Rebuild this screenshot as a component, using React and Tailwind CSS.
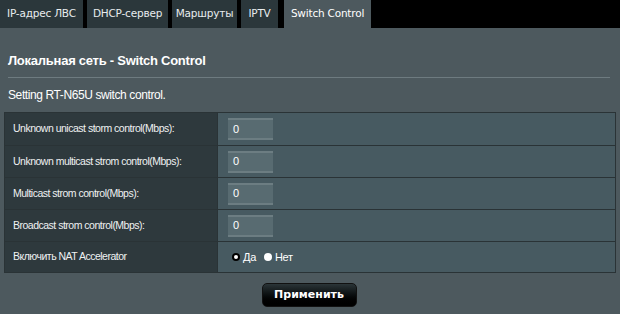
export default function App() {
  const rows = [
    "Unknown unicast storm control(Mbps):",
    "Unknown multicast strom control(Mbps):",
    "Multicast strom control(Mbps):",
    "Broadcast strom control(Mbps):",
  ];
  const tabs = [
    ["IP-адрес ЛВС", "w-[83px]"],
    ["DHCP-сервер", "w-[81px]"],
    ["Маршруты", "w-[65px]"],
    ["IPTV", "w-[37px]"],
  ];
  return (
    <div className="w-[620px] h-[314px] bg-[#4d595e] overflow-hidden" style={{ fontFamily: '"Liberation Sans", Arial, sans-serif' }}>
      <div className="h-[28px] bg-black flex items-stretch gap-[4px]" style={{ fontFamily: '"DejaVu Sans", Verdana, sans-serif' }}>
        {tabs.map(([t, w]) => (
          <div key={t} className={`${w} bg-[#2b373b] text-[#e8ecee] text-[10.5px] tracking-[-0.2px] flex items-center justify-center`}>{t}</div>
        ))}
        <div className="w-[87px] bg-[#4d595e] text-white text-[10.5px] tracking-[-0.2px] ml-[2px] flex items-center justify-center">Switch Control</div>
      </div>
      <div className="px-[8px] pt-[25px]">
        <div className="text-white font-bold text-[13px] leading-[16px] tracking-[-0.25px]">Локальная сеть - Switch Control</div>
        <div className="h-px bg-[#6e7b80] mt-[8px] mr-[2px]" />
        <div className="text-white text-[12px] leading-[14px] mt-[10px] tracking-[-0.4px]">Setting RT-N65U switch control.</div>
      </div>
      <div className="mx-[4px] mt-[10px] border border-[#2a3336] bg-[#475a61]">
        {rows.map((r, i) => (
          <div key={r} className={`flex h-[32px] ${i > 0 ? "border-t border-[#2a3336]" : ""}`}>
            <div className="w-[213px] bg-[#2e393d] text-[#eef1f2] text-[10.5px] tracking-[-0.5px] flex items-center pl-[8px] border-r border-[#2a3336]">{r}</div>
            <div className="flex items-center pl-[10px]">
              <div className="w-[45px] h-[22px] bg-[#586b71] border-t-[2px] border-t-[#6c7d82] border-b-[2px] border-b-[#6c7d82] text-white text-[11px] flex items-center pl-[5px]">0</div>
            </div>
          </div>
        ))}
        <div className="flex h-[31px] border-t border-[#2a3336]">
          <div className="w-[213px] bg-[#2e393d] text-[#eef1f2] text-[10.5px] tracking-[-0.5px] flex items-center pl-[8px] border-r border-[#2a3336]">Включить NAT Accelerator</div>
          <div className="flex items-center pl-[14px] text-white text-[11px] tracking-[-0.3px]">
            <span className="w-[8px] h-[8px] rounded-full bg-white border-[2px] border-black inline-block mr-[3px]" />
            <span>Да</span>
            <span className="w-[8px] h-[8px] rounded-full bg-white inline-block ml-[8px] mr-[3px]" />
            <span>Нет</span>
          </div>
        </div>
      </div>
      <div className="flex justify-center mt-[10px] pr-[2px]">
        <div className="w-[95px] h-[24px] rounded-[5px] bg-gradient-to-b from-[#2b3538] to-black border border-[#111] text-white font-bold text-[11px] flex items-center justify-center" style={{ fontFamily: '"DejaVu Sans", Verdana, sans-serif' }}>Применить</div>
      </div>
    </div>
  );
}
